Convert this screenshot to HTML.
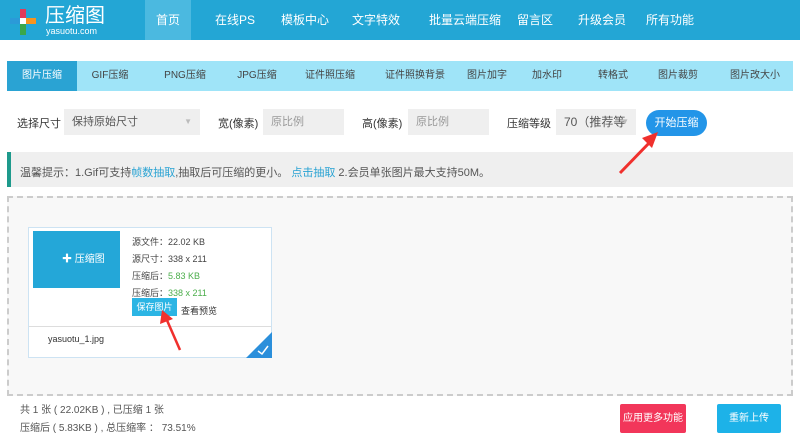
<!DOCTYPE html>
<html><head><meta charset="utf-8"><style>
*{margin:0;padding:0;box-sizing:border-box}
body{width:800px;height:440px;background:#fff;font-family:"Liberation Sans","Noto Sans CJK SC",sans-serif;font-size:11px;color:#333;position:relative;overflow:hidden}
.a{position:absolute}
.hdr{left:0;top:0;width:800px;height:40px;background:#23a6d5}
.nav{color:#fff;font-size:12px;top:0;height:40px;line-height:40px;text-align:center}
.tabs{left:7px;top:61px;width:786px;height:30px;background:#9fe4f8}
.tab{top:61px;height:30px;line-height:30px;font-size:10px;color:#444;text-align:center}
.inp{background:#efefef;height:26px;line-height:26px;padding-left:8px;color:#555}
</style></head><body>
<div class="a hdr"></div>
<svg class="a" style="left:10px;top:9px" width="26" height="26" viewBox="0 0 26 26">
<rect x="10" y="0" width="6" height="11" fill="#e23b5a"/><rect x="0" y="9" width="11" height="6" fill="#2b9ad8"/>
<rect x="15" y="9" width="11" height="6" fill="#f7941d"/><rect x="10" y="14" width="6" height="12" fill="#3aa74a"/>
<rect x="10" y="9" width="6" height="6" fill="#fff"/></svg>
<div class="a" style="left:45px;top:4px;color:#fff;font-size:20px;line-height:24px">压缩图</div>
<div class="a" style="left:46px;top:26px;color:#fff;font-size:9px">yasuotu.com</div>
<div class="a nav" style="left:145px;width:46px;background:#4bb9e0">首页</div>
<div class="a nav" style="left:200px;width:70px">在线PS</div>
<div class="a nav" style="left:270px;width:70px">模板中心</div>
<div class="a nav" style="left:340px;width:72px">文字特效</div>
<div class="a nav" style="left:415px;width:100px">批量云端压缩</div>
<div class="a nav" style="left:510px;width:50px">留言区</div>
<div class="a nav" style="left:570px;width:64px">升级会员</div>
<div class="a nav" style="left:638px;width:64px">所有功能</div>
<div class="a tabs"></div>
<div class="a tab" style="left:7px;width:70px;background:#2aa3d3;color:#fff">图片压缩</div>
<div class="a tab" style="left:80px;width:60px">GIF压缩</div>
<div class="a tab" style="left:150px;width:70px">PNG压缩</div>
<div class="a tab" style="left:222px;width:70px">JPG压缩</div>
<div class="a tab" style="left:290px;width:80px">证件照压缩</div>
<div class="a tab" style="left:370px;width:90px">证件照换背景</div>
<div class="a tab" style="left:455px;width:64px">图片加字</div>
<div class="a tab" style="left:522px;width:50px">加水印</div>
<div class="a tab" style="left:588px;width:50px">转格式</div>
<div class="a tab" style="left:650px;width:56px">图片裁剪</div>
<div class="a tab" style="left:722px;width:66px">图片改大小</div>
<div class="a" style="left:17px;top:115px">选择尺寸</div>
<div class="a inp" style="left:64px;top:109px;width:136px">保持原始尺寸<span style="position:absolute;right:8px;color:#bbb;font-size:8px">▼</span></div>
<div class="a" style="left:218px;top:115px">宽(像素)</div>
<div class="a inp" style="left:263px;top:109px;width:81px;color:#999">原比例</div>
<div class="a" style="left:362px;top:115px">高(像素)</div>
<div class="a inp" style="left:408px;top:109px;width:81px;color:#999">原比例</div>
<div class="a" style="left:507px;top:115px">压缩等级</div>
<div class="a inp" style="left:556px;top:109px;width:80px;font-size:12px">70（推荐等<span style="position:absolute;right:7px;color:#bbb;font-size:8px">▼</span></div>
<div class="a" style="left:646px;top:110px;width:61px;height:26px;border-radius:13px;background:#2395e8;color:#fff;line-height:26px;text-align:center">开始压缩</div>
<div class="a" style="left:7px;top:152px;width:786px;height:35px;background:#efefef;border-left:4px solid #1e9a8c"></div>
<svg class="a" style="left:600px;top:128px" width="60" height="50"><path d="M20 45 L52 12" stroke="#f0302d" stroke-width="3"/><path d="M58 4 L42 10 L52 20Z" fill="#f0302d"/></svg>
<div class="a" style="left:20px;top:164px;color:#555">温馨提示：1.Gif可支持<span style="color:#2aa3d3">帧数抽取</span>,抽取后可压缩的更小。 <span style="color:#2aa3d3">点击抽取</span> 2.会员单张图片最大支持50M。</div>
<div class="a" style="left:7px;top:196px;width:786px;height:200px;background:#f8f8f8;border:2px dashed #ccc"></div>
<div class="a" style="left:28px;top:227px;width:244px;height:131px;background:#fff;border:1px solid #cde3f3"></div>
<div class="a" style="left:33px;top:231px;width:87px;height:57px;background:#24a7d8"></div>
<div class="a" style="left:62px;top:250px;color:#fff;font-size:10px">✚ 压缩图</div>
<div class="a" style="left:29px;top:326px;width:242px;border-top:1px solid #ddd"></div>
<div class="a" style="left:132px;top:234px;font-size:9px;line-height:17px;color:#444">源文件：22.02 KB<br>源尺寸：338 x 211<br>压缩后：<span style="color:#4cae4c">5.83 KB</span><br>压缩后：<span style="color:#4cae4c">338 x 211</span></div>
<div class="a" style="left:132px;top:298px;width:45px;height:18px;background:#2cb5e4;color:#fff;font-size:9px;line-height:18px;text-align:center">保存图片</div>
<div class="a" style="left:181px;top:304px;font-size:9px">查看预览</div>
<svg class="a" style="left:160px;top:310px" width="30" height="42"><path d="M20 40 L6 8" stroke="#f0302d" stroke-width="2.5"/><path d="M2 0 L0 14 L13 9Z" fill="#f0302d"/></svg>
<div class="a" style="left:48px;top:334px;font-size:9px">yasuotu_1.jpg</div>
<svg class="a" style="left:246px;top:332px" width="26" height="26"><path d="M26 0 L26 26 L0 26Z" fill="#2b8fdb"/><path d="M12 19 L16 22 L22 14" stroke="#fff" stroke-width="1.5" fill="none"/></svg>
<div class="a" style="left:20px;top:402px;color:#555;font-size:10px;line-height:18px">共 1 张 ( 22.02KB ) , 已压缩 1 张<br>压缩后 ( 5.83KB ) , 总压缩率 ： 73.51%</div>
<div class="a" style="left:620px;top:404px;width:66px;height:29px;background:#f2365a;color:#fff;line-height:29px;text-align:center;border-radius:2px;font-size:10px">应用更多功能</div>
<div class="a" style="left:717px;top:404px;width:64px;height:29px;background:#1db2e8;color:#fff;line-height:29px;text-align:center;border-radius:2px;font-size:10px">重新上传</div>
</body></html>
